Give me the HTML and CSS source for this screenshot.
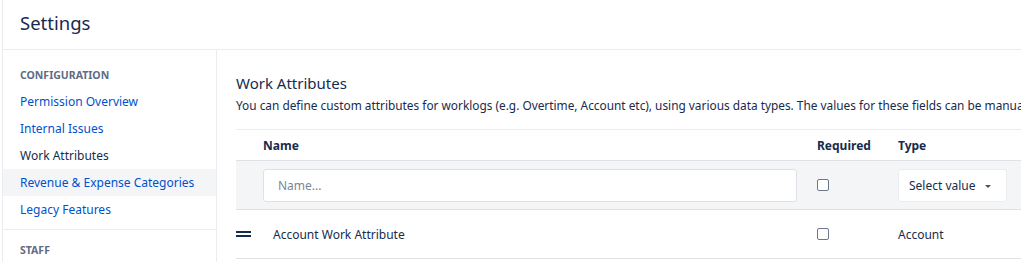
FILE: index.html
```
<!DOCTYPE html>
<html lang="en">
<head>
    <meta charset="UTF-8">
    <meta name="viewport" content="width=device-width, initial-scale=1.0">
    <title>Settings</title>
    <link rel="stylesheet" href="styles.css">
</head>
<body>
    <div class="app">
        <header class="page-header">
            <h1>Settings</h1>
        </header>

        <div class="layout">
            <!-- Sidebar navigation -->
            <nav class="sidebar">
                <div class="nav-group">
                    <div class="nav-title">Configuration</div>
                    <a class="nav-link" href="#">Permission Overview</a>
                    <a class="nav-link" href="#">Internal Issues</a>
                    <a class="nav-link active" href="#">Work Attributes</a>
                    <a class="nav-link hover" href="#">Revenue &amp; Expense Categories</a>
                    <a class="nav-link" href="#">Legacy Features</a>
                </div>
                <div class="nav-group">
                    <div class="nav-title">Staff</div>
                </div>
            </nav>

            <!-- Work attributes -->
            <main class="content">
                <h2>Work Attributes</h2>
                <p class="intro">You can define custom attributes for worklogs (e.g. Overtime, Account etc), using various data types. The values for these fields can be manually entered when logging work.</p>

                <div class="attr-table">
                    <div class="row head">
                        <div class="cell handle"></div>
                        <div class="cell name">Name</div>
                        <div class="cell required">Required</div>
                        <div class="cell type">Type</div>
                    </div>
                    <div class="row new">
                        <div class="cell handle"></div>
                        <div class="cell name"><input type="text" placeholder="Name..."></div>
                        <div class="cell required"><span class="checkbox"></span></div>
                        <div class="cell type">
                            <button class="select">Select value <span class="caret"></span></button>
                        </div>
                    </div>
                    <div class="row">
                        <div class="cell handle"><span class="drag"></span></div>
                        <div class="cell name text">Account Work Attribute</div>
                        <div class="cell required"><span class="checkbox"></span></div>
                        <div class="cell type">Account</div>
                    </div>
                </div>
            </main>
        </div>
    </div>
</body>
</html>
```

FILE: styles.css
```
body {
    margin: 0;
    padding-left: 2px;
    font-family: "Noto Sans", "Open Sans", sans-serif;
    color: #172b4d;
    background-color: #fff;
    overflow: hidden;
}

.app {
    border-left: 1px solid #ebecf0;
    min-height: 262px;
}

.page-header {
    height: 50px;
    border-bottom: 1px solid #ebecf0;
    padding-left: 17px;
    box-sizing: border-box;
}

.page-header h1 {
    margin: 0;
    font-size: 18.5px;
    font-weight: 400;
    line-height: 45px;
}

.layout {
    display: flex;
}

.sidebar {
    width: 213px;
    flex-shrink: 0;
    border-right: 1px solid #ebecf0;
    min-height: 212px;
}

.nav-group {
    padding-top: 15px;
    padding-bottom: 6px;
    border-bottom: 1px solid #ebecf0;
}

.nav-group:last-child {
    padding-top: 10px;
    border-bottom: none;
}

.nav-title {
    padding-left: 17px;
    font-size: 10.5px;
    font-weight: 700;
    text-transform: uppercase;
    color: #5e6c84;
    line-height: 20px;
    margin-bottom: 3px;
}

.nav-link {
    display: block;
    padding-left: 17px;
    font-size: 12px;
    line-height: 27px;
    color: #0052cc;
    text-decoration: none;
}

.nav-link.active {
    color: #172b4d;
}

.nav-link.hover {
    background-color: #f4f5f7;
}

.content {
    flex: 1;
    padding-left: 19px;
    padding-top: 22px;
    overflow: hidden;
}

.content h2 {
    margin: 0;
    font-size: 15px;
    font-weight: 400;
    line-height: 22px;
}

.intro {
    margin: 0;
    font-size: 11.85px;
    line-height: 22px;
    white-space: nowrap;
}

.attr-table {
    width: 900px;
    margin-top: 13px;
    border-top: 1px solid #ebecf0;
}

.row {
    display: flex;
    align-items: center;
    height: 48px;
    border-bottom: 1px solid #dfe1e6;
    font-size: 12px;
}

.row.head {
    height: 30px;
    font-weight: 700;
}

.row.new {
    background-color: #f4f5f7;
}

.cell.handle {
    width: 27px;
}

.cell.name {
    width: 554px;
}

.cell.name.text {
    padding-left: 10px;
    width: 544px;
}

.cell.required {
    width: 81px;
}

.cell.type {
    flex: 1;
}

.cell input {
    width: 534px;
    height: 33px;
    box-sizing: border-box;
    border: 1px solid #dfe1e6;
    border-radius: 3px;
    padding: 0 14px;
    font-family: inherit;
    font-size: 12px;
    color: #172b4d;
    background-color: #fff;
}

.cell input::placeholder {
    color: #7a869a;
}

.checkbox {
    display: block;
    width: 10px;
    height: 10px;
    border: 1px solid #6b778c;
    border-radius: 2px;
    background-color: #fff;
}

.select {
    width: 109px;
    height: 33px;
    border: 1px solid #ebecf0;
    border-radius: 3px;
    background-color: #fff;
    font-family: inherit;
    font-size: 12px;
    color: #172b4d;
    text-align: left;
    padding: 0 10px;
    cursor: pointer;
}

.caret {
    display: inline-block;
    margin-left: 6px;
    vertical-align: middle;
    border-left: 3px solid transparent;
    border-right: 3px solid transparent;
    border-top: 3px solid #42526e;
}

.drag {
    display: block;
    width: 15px;
    height: 2px;
    border-top: 2px solid #172b4d;
    border-bottom: 2px solid #172b4d;
    box-sizing: content-box;
}
```
